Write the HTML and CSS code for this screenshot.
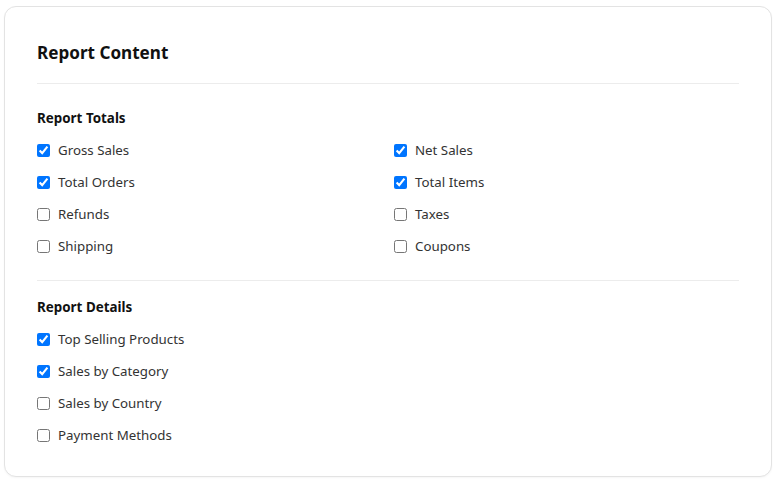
FILE: index.html
```html
<!DOCTYPE html>
<html lang="en">
<head>
<meta charset="utf-8">
<title>Report Content</title>
<link rel="stylesheet" href="styles.css">
</head>
<body>
<div class="page">
  <section class="card">
    <header class="card-header">
      <h2 class="card-title">Report Content</h2>
    </header>
    <div class="group group-totals">
      <h3 class="group-title">Report Totals</h3>
      <div class="options options-grid">
        <label class="option"><input type="checkbox" checked><span>Gross Sales</span></label>
        <label class="option"><input type="checkbox" checked><span>Net Sales</span></label>
        <label class="option"><input type="checkbox" checked><span>Total Orders</span></label>
        <label class="option"><input type="checkbox" checked><span>Total Items</span></label>
        <label class="option"><input type="checkbox"><span>Refunds</span></label>
        <label class="option"><input type="checkbox"><span>Taxes</span></label>
        <label class="option"><input type="checkbox"><span>Shipping</span></label>
        <label class="option"><input type="checkbox"><span>Coupons</span></label>
      </div>
    </div>
    <div class="group group-details">
      <h3 class="group-title">Report Details</h3>
      <div class="options">
        <label class="option"><input type="checkbox" checked><span>Top Selling Products</span></label>
        <label class="option"><input type="checkbox" checked><span>Sales by Category</span></label>
        <label class="option"><input type="checkbox"><span>Sales by Country</span></label>
        <label class="option"><input type="checkbox"><span>Payment Methods</span></label>
      </div>
    </div>
  </section>
</div>
</body>
</html>
```
FILE: styles.css
```css
* { box-sizing: border-box; }
html, body { margin: 0; padding: 0; background: #ffffff; }
body {
  font-family: "Noto Sans", "Liberation Sans", sans-serif;
  color: #1f2937;
}
.page {
  padding: 6px 7px 5px 4px;
}
.card {
  background: #fff;
  border: 1px solid #e3e3e3;
  border-radius: 12px;
  padding: 32px 32px 31px 32px;
  box-shadow: 0 1px 2px rgba(0,0,0,0.04);
}
.card-header {
  padding-bottom: 16px;
  border-bottom: 1px solid #ececec;
}
.card-title {
  margin: 0;
  font-size: 17.1px;
  line-height: 28px;
  font-weight: 700;
  color: #111111;
}
.group-totals {
  padding-top: 24px;
  padding-bottom: 24px;
  border-bottom: 1px solid #ececec;
}
.group-details {
  padding-top: 16px;
}
.group-title {
  margin: 0 0 12px 0;
  font-size: 13.4px;
  line-height: 20px;
  font-weight: 700;
  color: #111111;
}
.options {
  display: flex;
  flex-direction: column;
  gap: 12px;
}
.options-grid {
  display: grid;
  grid-template-columns: 1fr 1fr;
  column-gap: 12px;
  row-gap: 12px;
}
.option {
  display: flex;
  align-items: center;
  gap: 8px;
  height: 20px;
  font-size: 13.3px;
  line-height: 20px;
  color: #333333;
}
.option input {
  margin: 0;
  width: 13px;
  height: 13px;
  flex: none;
}
```
